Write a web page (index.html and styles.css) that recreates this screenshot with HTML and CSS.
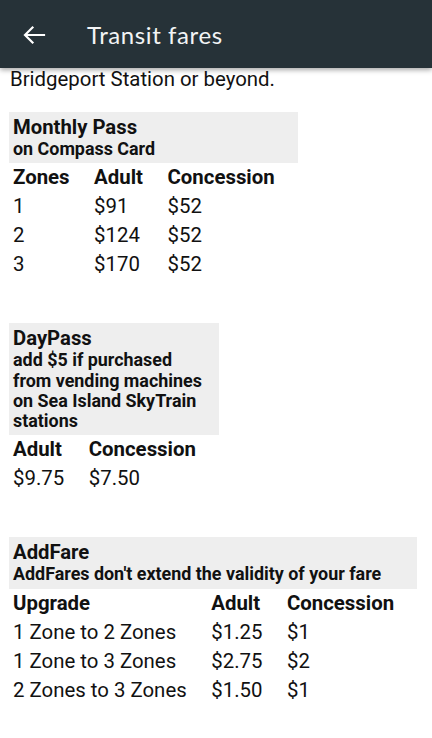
FILE: index.html
```html
<!DOCTYPE html>
<html lang="en">
<head>
<meta charset="utf-8">
<title>Transit fares</title>
<link rel="stylesheet" href="styles.css">
</head>
<body>
<header class="appbar">
  <button class="back" aria-label="Back">
    <svg width="24" height="20" viewBox="0 0 24 20" aria-hidden="true">
      <path d="M3.5 10H22M10.5 2.5L3 10L10.5 17.5" fill="none" stroke="#fff" stroke-width="2.2" stroke-linecap="square" stroke-linejoin="miter"/>
    </svg>
  </button>
  <h1 class="title">Transit fares</h1>
</header>
<main class="content">
  <p class="intro">Bridgeport Station or beyond.</p>

  <table class="fares">
    <caption class="cap">
      <span class="cap-title">Monthly Pass</span>
      <span class="cap-sub">on Compass Card</span>
    </caption>
    <tr class="head"><th>Zones</th><th>Adult</th><th>Concession</th></tr>
    <tr><td>1</td><td>$91</td><td>$52</td></tr>
    <tr><td>2</td><td>$124</td><td>$52</td></tr>
    <tr><td>3</td><td>$170</td><td>$52</td></tr>
  </table>

  <table class="fares">
    <caption class="cap">
      <span class="cap-title">DayPass</span>
      <span class="cap-sub">add $5 if purchased<br>from vending machines<br>on Sea Island SkyTrain<br>stations</span>
    </caption>
    <tr class="head"><th>Adult</th><th>Concession</th></tr>
    <tr><td>$9.75</td><td>$7.50</td></tr>
  </table>

  <table class="fares">
    <caption class="cap">
      <span class="cap-title">AddFare</span>
      <span class="cap-sub">AddFares don't extend the validity of your fare</span>
    </caption>
    <tr class="head"><th>Upgrade</th><th>Adult</th><th>Concession</th></tr>
    <tr><td>1 Zone to 2 Zones</td><td>$1.25</td><td>$1</td></tr>
    <tr><td>1 Zone to 3 Zones</td><td>$2.75</td><td>$2</td></tr>
    <tr><td>2 Zones to 3 Zones</td><td>$1.50</td><td>$1</td></tr>
  </table>
</main>
</body>
</html>
```

FILE: styles.css
```css
html, body {
  margin: 0;
  padding: 0;
  background: #fff;
}

body {
  font-family: Roboto, "Liberation Sans", sans-serif;
  color: #111;
  width: 432px;
  height: 738px;
  overflow: hidden;
}

.appbar {
  height: 68px;
  background: #263238;
  display: flex;
  align-items: center;
  box-shadow: 0 2px 5px rgba(0, 0, 0, 0.35);
  position: relative;
  z-index: 2;
}

.back {
  background: none;
  border: 0;
  padding: 0;
  margin: 2px 0 0 22px;
  width: 24px;
  height: 20px;
  display: flex;
}

.title {
  margin: 1px 0 0 41px;
  font-family: Lato, "Noto Sans", sans-serif;
  font-weight: 400;
  font-size: 24px;
  letter-spacing: 0.6px;
  color: #f2f4f5;
}

.content {
  padding: 0 9px;
}

.intro {
  margin: 1px 0 23px 1px;
  font-size: 20.4px;
  line-height: 20px;
}

.fares {
  border-collapse: collapse;
  margin-bottom: 44px;
}

.cap {
  caption-side: top;
  text-align: left;
  background: #eeeeee;
  padding: 3px 4px 4px;
  font-weight: 700;
}

.cap-title {
  display: block;
  font-size: 20.3px;
  line-height: 24px;
}

.cap-sub {
  display: block;
  font-size: 17.9px;
  line-height: 20.3px;
}

.fares th,
.fares td {
  font-size: 20.4px;
  line-height: 29px;
  padding: 0 20.5px 0 4px;
  text-align: left;
  white-space: nowrap;
}

.fares th:last-child,
.fares td:last-child {
  padding-right: 23px;
}

.fares th {
  font-weight: 700;
}

.fares td {
  font-weight: 400;
}
```
